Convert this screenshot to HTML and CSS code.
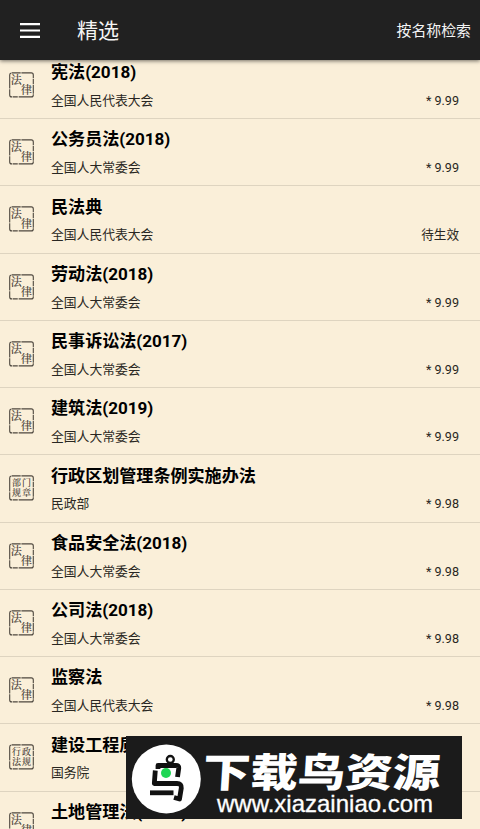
FILE: index.html
```
<!DOCTYPE html>
<html lang="zh-CN">
<head>
<meta charset="utf-8">
<title>精选</title>
<link rel="stylesheet" href="styles.css">
</head>
<body>
<header class="bar">
  <svg class="menu" viewBox="0 0 20 15"><path d="M0 1.2h20M0 7.5h20M0 13.8h20"/></svg>
  <h1>精选</h1>
  <span class="search">按名称检索</span>
</header>
<main class="list" id="list"></main>
<aside class="mark">
  <svg class="logo" viewBox="0 0 70 70">
    <circle cx="35.300" cy="36" r="34.500" fill="#fff"/>
    <g fill="none" stroke="#111" stroke-width="4.800" stroke-linejoin="round">
      <circle cx="39.300" cy="16.500" r="3.500" stroke-width="2.300"/>
      <path d="M27 26V22.500H45Q48 22.500 47.800 25L46.500 34"/>
      <path d="M24.300 27.500L23.300 40.500H46Q50.700 40.500 50.300 45L48.500 56L43 54.500"/>
      <path d="M19 49.800H42.500"/>
    </g>
    <circle cx="35" cy="30" r="5" fill="#20d655"/>
  </svg>
  <div class="brand"><strong>下载鸟资源</strong><span>www.xiazainiao.com</span></div>
</aside>
<script src="list.js"></script>
</body>
</html>
```
FILE: styles.css
```
* { box-sizing: border-box; }
body {
  margin: 0; width: 480px; height: 829px; overflow: hidden;
  background: #faefd9; color: #000;
  font-family: Roboto, "Noto Sans CJK SC", sans-serif;
}
.bar {
  position: relative; z-index: 1; height: 60px; padding: 0 9px 0 20px;
  display: flex; align-items: center;
  background: #212121; color: #f4f4f4; box-shadow: 0 1px 4px rgba(0,0,0,.55);
}
.menu { width: 20px; height: 15px; fill: none; stroke: #fff; stroke-width: 2.2; }
.bar h1 { margin: 2px 0 0 37px; font-size: 21px; line-height: 30px; font-weight: 400; }
.search { margin: 1px 0 0 auto; font-size: 14.9px; line-height: 22px; }
.list { margin-top: -8.250px; }
.row {
  height: 67.250px; padding: 0 21px 0 9px; display: flex; align-items: center;
  border-bottom: 1px solid #ded4c0;
}
.seal { width: 25px; height: 26px; flex: none; }
.seal rect { fill: none; stroke: #4d473e; stroke-width: 1.100; stroke-dasharray: 9 .7 16 .9 5 .6; }
.seal text { font-family: "Noto Serif CJK SC", "Noto Sans CJK SC", serif; fill: #36312b; stroke: #36312b; stroke-width: .1px; }
.info { flex: 1; margin-left: 17px; padding-top: 0; }
.info h2 { margin: 0; font-size: 17.100px; line-height: 25px; font-weight: 700; letter-spacing: -.03px; white-space: nowrap; }
.meta { display: flex; justify-content: space-between; margin-top: 5.750px; font-size: 12.800px; line-height: 19px; color: #292722; }
.meta span + span { font-size: 12.600px; }
.mark {
  position: absolute; z-index: 2; left: 126px; top: 736px; width: 336px; height: 83px;
  padding-left: 5px; display: flex; align-items: center; background: #1b1b1b; color: #fff;
}
.logo { width: 70px; height: 70px; flex: none; overflow: visible; }
.brand { flex: 1; height: 83px; padding-top: 12px; }
.brand strong {
  display: block; height: 44px; margin-left: 2px; font: 900 47.500px/43px "Noto Sans CJK SC", sans-serif;
  white-space: nowrap; transform: scaleY(.84) skewX(-3deg);
}
.brand span { display: block; margin-left: 16px; font: 24px/24px "Liberation Sans", sans-serif; white-space: nowrap; -webkit-text-stroke: .3px #fff; }
```
FILE: list.js
```
const rows = [
  ["法律", "宪法(2018)", "全国人民代表大会", "* 9.99"],
  ["法律", "公务员法(2018)", "全国人大常委会", "* 9.99"],
  ["法律", "民法典", "全国人民代表大会", "待生效"],
  ["法律", "劳动法(2018)", "全国人大常委会", "* 9.99"],
  ["法律", "民事诉讼法(2017)", "全国人大常委会", "* 9.99"],
  ["法律", "建筑法(2019)", "全国人大常委会", "* 9.99"],
  ["部门规章", "行政区划管理条例实施办法", "民政部", "* 9.98"],
  ["法律", "食品安全法(2018)", "全国人大常委会", "* 9.98"],
  ["法律", "公司法(2018)", "全国人大常委会", "* 9.98"],
  ["法律", "监察法", "全国人民代表大会", "* 9.98"],
  ["行政法规", "建设工程质", "国务院", ""],
  ["法律", "土地管理法(2019)", "", ""]
];
const glyph = (c, x, y, s) => `<text x="${x}" y="${y}" font-size="${s}">${c}</text>`;
const seal = k => {
  const t = k.length === 2
    ? glyph(k[0], 1.8, 12, 11) + glyph(k[1], 12, 22, 11)
    : glyph(k[0], 3, 11, 9) + glyph(k[1], 13, 11, 9) + glyph(k[2], 3, 21.3, 9) + glyph(k[3], 13, 21.3, 9);
  return `<svg class="seal" viewBox="0 0 25 26"><rect x=".7" y=".9" width="23.600" height="24" rx="2"/>${t}</svg>`;
};
document.getElementById("list").innerHTML = rows.map(([k, t, o, s]) =>
  `<article class="row">${seal(k)}<div class="info"><h2>${t}</h2><div class="meta"><span>${o || "&nbsp;"}</span><span>${s}</span></div></div></article>`
).join("");
```
